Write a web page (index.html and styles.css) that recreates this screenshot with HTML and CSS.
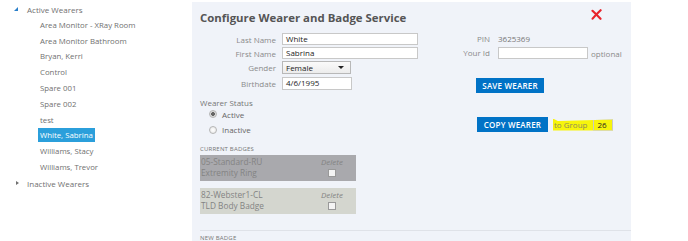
FILE: index.html
```html
<!DOCTYPE html>
<html>
<head>
<meta charset="utf-8">
<link rel="stylesheet" href="styles.css">
</head>
<body>
<div class="page">
  <aside class="tree">
    <div class="node"><span class="caret-open"></span>Active Wearers</div>
    <ul class="children">
      <li>Area Monitor - XRay Room</li>
      <li>Area Monitor Bathroom</li>
      <li>Bryan, Kerri</li>
      <li>Control</li>
      <li>Spare 001</li>
      <li>Spare 002</li>
      <li>test</li>
      <li><span class="selected">White, Sabrina</span></li>
      <li>Williams, Stacy</li>
      <li>Williams, Trevor</li>
    </ul>
    <div class="node"><span class="caret-closed"></span>Inactive Wearers</div>
  </aside>

  <main class="panel">
    <div class="head">
      <h1 class="title">Configure Wearer and Badge Service</h1>
      <svg class="close" width="11" height="11" viewBox="0 0 11 11">
        <path d="M1.5 1.8 Q5 5 9.5 9.8" stroke="#e8232a" stroke-width="2.2" fill="none" stroke-linecap="round"/>
        <path d="M9.6 1.2 Q5.5 5 1.6 9.6" stroke="#e8232a" stroke-width="2.2" fill="none" stroke-linecap="round"/>
      </svg>
    </div>

    <div class="body">
      <div class="left">
        <div class="form">
          <label>Last Name</label><div class="input wide">White</div>
          <label>First Name</label><div class="input wide">Sabrina</div>
          <label>Gender</label><div class="select">Female<span class="arrow"></span></div>
          <label>Birthdate</label><div class="input short">4/6/1995</div>
        </div>

        <div class="status">
          <div class="status-label">Wearer Status</div>
          <div class="radio-row first"><span class="radio checked"></span>Active</div>
          <div class="radio-row"><span class="radio"></span>Inactive</div>
        </div>

        <div class="section-label">CURRENT BADGES</div>
        <div class="badge dark">
          <div class="badge-text"><div>05-Standard-RU</div><div>Extremity Ring</div></div>
          <div class="badge-del"><div class="del">Delete</div><span class="check"></span></div>
        </div>
        <div class="badge light">
          <div class="badge-text"><div>82-Webster1-CL</div><div>TLD Body Badge</div></div>
          <div class="badge-del"><div class="del">Delete</div><span class="check"></span></div>
        </div>
      </div>

      <div class="right">
        <div class="form2">
          <label>PIN</label><div class="value">3625369</div>
          <label>Your Id</label><div class="id-row"><div class="input id"></div><span class="hint">optional</span></div>
        </div>
        <button class="btn save">SAVE WEARER</button>
        <div class="copy-row">
          <button class="btn copy">COPY WEARER</button>
          <div class="hl"><span class="hl-text">to Group</span><span class="group">26</span></div>
        </div>
      </div>
    </div>

    <div class="divider"></div>
    <div class="section-label newbadge">NEW BADGE</div>
  </main>
</div>
</body>
</html>
```

FILE: styles.css
```css
* { box-sizing: border-box; }
html, body { margin: 0; padding: 0; background: #fff; }
body { font-family: "Open Sans", "Noto Sans", sans-serif; font-size: 8px; color: #6e6e6e; overflow: hidden; }

.page { display: flex; width: 688px; height: 241px; }

.tree { width: 192px; flex: none; padding-top: 2px; }
.node { height: 15.8px; line-height: 15.8px; padding-left: 27px; position: relative; color: #707070; }
.caret-open { position: absolute; left: 14px; top: 5px; width: 0; height: 0; border-left: 4px solid transparent; border-bottom: 4px solid #2a7fc9; }
.caret-closed { position: absolute; left: 16px; top: 5px; width: 0; height: 0; border-top: 2.5px solid transparent; border-bottom: 2.5px solid transparent; border-left: 3px solid #707070; }
.children { list-style: none; margin: 0; padding: 0 0 0 38px; }
.children li { height: 15.8px; line-height: 15.8px; padding-left: 2px; color: #707070; font-size: 7.8px; }
.selected { display: inline-block; margin-left: -2px; padding: 0 2px; height: 14px; line-height: 14px; background: #2b9fdb; color: #fff; }

.panel { width: 439px; flex: none; margin-top: 2px; background: #f0f3f9; padding: 0 0 0 8px; }
.head { display: flex; justify-content: space-between; align-items: flex-start; padding-right: 29px; }
.title { margin: 0; padding-top: 6px; font-size: 11.4px; line-height: 20px; font-weight: 700; color: #555; }
.close { margin-top: 6.5px; }

.body { display: flex; margin-top: 5px; }
.left { width: 260px; }
.form { display: grid; grid-template-columns: 76px auto; column-gap: 6px; row-gap: 2px; align-items: center; }
.form label { text-align: right; color: #8a8a8a; }
.input { height: 12px; line-height: 10px; border: 1px solid #c8c8c8; background: #fff; padding-left: 3px; color: #1a1a1a; }
.wide { width: 136px; }
.short { width: 70px; height: 13px; margin-top: 1px; }
.select { position: relative; width: 69px; height: 13px; line-height: 11px; border: 1px solid #b8b8b8; background: linear-gradient(#fafafa, #ececec); padding-left: 3px; color: #1a1a1a; }
.arrow { position: absolute; right: 6px; top: 4px; border-left: 3px solid transparent; border-right: 3px solid transparent; border-top: 3px solid #222; }

.status { margin-top: 7px; }
.status-label { line-height: 12px; color: #777; }
.radio-row { display: flex; align-items: center; height: 15.5px; padding-left: 9px; color: #666; }
.radio-row.first { margin-top: -2.5px; }
.radio { width: 8px; height: 8px; border-radius: 50%; border: 1px solid #b5b5b5; background: radial-gradient(#fff, #e4e4e4); margin-right: 5px; }
.radio.checked { background: radial-gradient(circle, #666 0 1.6px, #dcdcdc 2.2px); }

.section-label { font-size: 6px; letter-spacing: 0.2px; color: #777; margin-top: 7.5px; line-height: 8px; }
.badge { width: 156px; height: 26px; display: flex; justify-content: space-between; padding: 2px 0 0 1px; color: #838383; line-height: 10.5px; font-size: 8.3px; }
.badge.dark { background: #a9a9ad; margin-top: 2px; }
.badge.light { background: #d4d6cf; margin-top: 7px; }
.badge-del { width: 38px; display: flex; flex-direction: column; align-items: center; padding-right: 10px; font-size: 8px; }
.del { font-style: italic; }
.check { width: 8px; height: 8px; border: 1px solid #999; background: #f4f4f4; margin-top: 1px; }

.right { padding-left: 0; }
.form2 { display: grid; grid-template-columns: 30px auto; column-gap: 8px; row-gap: 2px; align-items: center; }
.form2 label { text-align: right; color: #8a8a8a; white-space: nowrap; height: 12px; line-height: 12px; }
.value { color: #777; line-height: 12px; }
.id-row { display: flex; align-items: center; }
.id { width: 90px; }
.hint { margin-left: 3px; color: #8a8a8a; }

.btn { font-family: inherit; border: 0; background: #0072c6; color: #fff; font-size: 8px; font-weight: 600; letter-spacing: 0.2px; padding: 0; height: 15px; cursor: pointer; }
.save { display: block; width: 68px; margin: 19px 0 0 16px; }
.copy-row { display: flex; align-items: center; margin: 24px 0 0 17px; }
.copy { width: 71px; }
.hl { margin-left: 5px; height: 12px; width: 60px; background: #f7f40c; padding-left: 1px; clip-path: polygon(0 0, 8% 20%, 100% 8%, 100% 100%, 0 100%); display: flex; align-items: center; }
.hl-text { color: #8c8c5a; line-height: 12px; white-space: nowrap; }
.group { margin-left: 6px; width: 23px; height: 12px; border: 1px solid #c8c8c8; line-height: 10px; padding-left: 3px; color: #222; }

.divider { margin-top: 16px; height: 1px; background: #dfe2e8; }
.newbadge { margin-top: 3px; }
```
